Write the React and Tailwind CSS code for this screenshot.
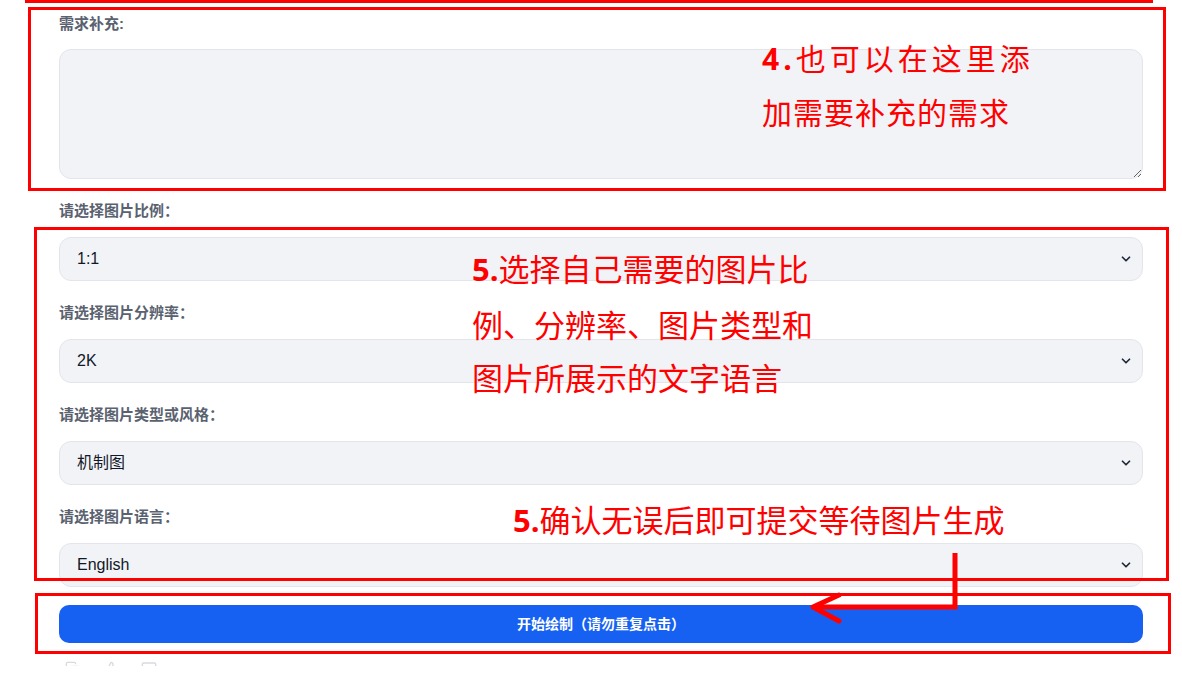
// Image generation form with red tutorial annotations drawn over it

import { ChevronDown, Copy, ThumbsUp, MessageSquare } from 'lucide-react'

const fontStack = { fontFamily: '"Liberation Sans", "Noto Sans CJK SC", sans-serif' }
const cjk = { fontFamily: '"Noto Sans CJK SC", sans-serif' }
const num = { fontFamily: '"Open Sans", sans-serif' }

function FieldLabel({ children }) {
  return (
    <label className="block h-5 text-[15px] font-bold leading-5 text-[#5a6270]">
      {children}
    </label>
  )
}

function SelectField({ label, value, options, last }) {
  return (
    <div className={last ? '' : 'mb-[22px]'}>
      <FieldLabel>{label}</FieldLabel>
      <div className="relative mt-4">
        <select
          defaultValue={value}
          className="block h-[44px] w-full appearance-none rounded-xl border border-[#e3e5ea] bg-[#f2f3f7] pl-[17px] pr-10 text-base text-[#111827] focus:outline-none"
        >
          {options.map((o) => (
            <option key={o} value={o}>
              {o}
            </option>
          ))}
        </select>
        <ChevronDown
          size={14}
          strokeWidth={3}
          className="pointer-events-none absolute right-[10px] top-[15px] text-[#1f2937]"
        />
      </div>
    </div>
  )
}

export default function App() {
  return (
    <div className="relative h-[680px] w-[1182px] overflow-hidden bg-white" style={fontStack}>
      {/* form */}
      <div className="pl-[59px] pr-[39px] pt-[14px]">
        <div className="mb-[22px]">
          <FieldLabel>需求补充:</FieldLabel>
          <textarea className="mt-[15px] block h-[130px] w-full resize-y rounded-xl border border-[#e3e5ea] bg-[#f2f3f7] focus:outline-none" />
        </div>

        <SelectField label="请选择图片比例：" value="1:1" options={['1:1', '4:3', '16:9', '3:4', '9:16']} />
        <SelectField label="请选择图片分辨率：" value="2K" options={['1K', '2K', '4K']} />
        <SelectField label="请选择图片类型或风格：" value="机制图" options={['机制图', '流程图', '示意图']} />
        <SelectField label="请选择图片语言：" value="English" options={['English', '中文']} last />

        <button
          type="button"
          className="mt-[18px] flex h-[38px] w-full items-center justify-center rounded-[10px] bg-[#1761f2] text-sm font-bold text-white"
        >
          开始绘制（请勿重复点击）
        </button>

        {/* action icons, mostly cut off by the bottom of the view */}
        <div className="mt-[18px] flex h-[5px] items-start gap-[22px] overflow-hidden pl-[6px] text-[#d7dade]">
          <Copy size={16} />
          <ThumbsUp size={16} />
          <MessageSquare size={16} />
        </div>
      </div>

      {/* annotation boxes */}
      <div className="pointer-events-none absolute left-[25px] top-[-100px] h-[103px] w-[1128px] border-[3px] border-[#ff0000]" />
      <div className="pointer-events-none absolute left-[28px] top-[7px] h-[184px] w-[1138px] border-[3px] border-[#ff0000]" />
      <div className="pointer-events-none absolute left-[34px] top-[227px] h-[354px] w-[1135px] border-[3px] border-[#ff0000]" />
      <div className="pointer-events-none absolute left-[35px] top-[593px] h-[61px] w-[1136px] border-[3px] border-[#ff0000]" />

      {/* annotation texts */}
      <div className="pointer-events-none absolute left-[762px] top-[31px] text-[30px] leading-[53px] text-[#ff0000]" style={cjk}>
        <div className="tracking-[4px]">
          <span className="font-bold" style={num}>4.</span>也可以在这里添
        </div>
        <div className="tracking-[1px]">加需要补充的需求</div>
      </div>

      <div className="pointer-events-none absolute left-[472px] top-[241px] text-[31px] leading-[53.5px] text-[#ff0000]" style={cjk}>
        <div>
          <span className="font-bold" style={num}>5.</span>选择自己需要的图片比
        </div>
        <div>例、分辨率、图片类型和</div>
        <div>图片所展示的文字语言</div>
      </div>

      <div className="pointer-events-none absolute left-[513px] top-[492px] text-[31px] leading-[54px] text-[#ff0000]" style={cjk}>
        <span className="font-bold" style={num}>5.</span>确认无误后即可提交等待图片生成
      </div>

      {/* arrow */}
      <svg className="pointer-events-none absolute left-0 top-0" width="1182" height="680">
        <polyline points="955,553 955,607 815,607" fill="none" stroke="#ff0000" strokeWidth="5" />
        <polyline points="839,595 813,607 839,621" fill="none" stroke="#ff0000" strokeWidth="5" strokeLinecap="round" strokeLinejoin="round" />
      </svg>
    </div>
  )
}
